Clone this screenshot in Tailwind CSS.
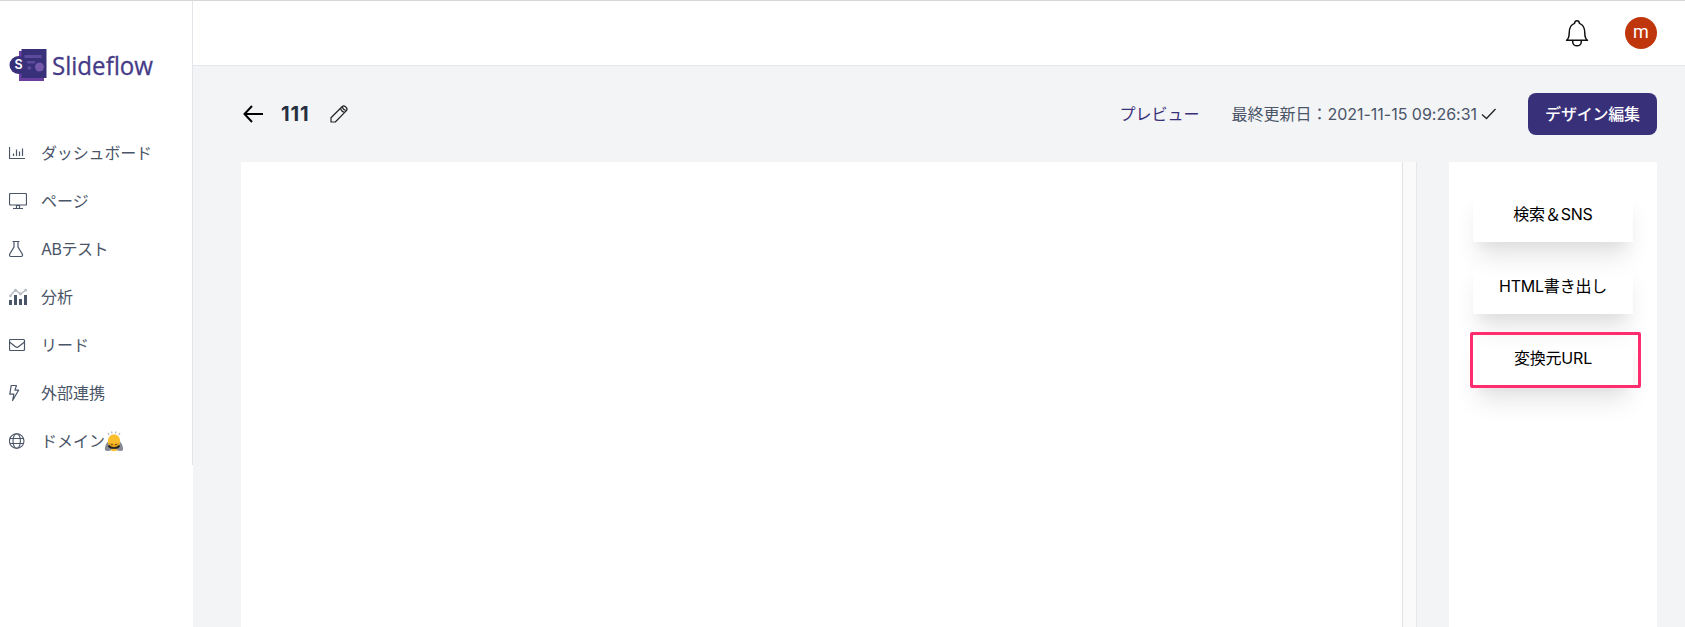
<!DOCTYPE html>
<html lang="ja">
<head>
    <meta charset="UTF-8">
    <meta name="viewport" content="width=device-width, initial-scale=1.0">
    <title>Slideflow</title>
    <script src="https://cdn.jsdelivr.net/npm/@tailwindcss/browser@4"></script>
</head>
<body class="h-screen overflow-hidden bg-white font-['Inter','Noto_Sans_CJK_JP',sans-serif] text-base text-[#4a5568]">
    <div class="flex h-full border-t border-[#d6d6d6]">
        <!-- Sidebar -->
        <aside class="w-[193px] shrink-0">
            <div class="h-[464px] border-r border-[#e2e5ea]">
                <div class="h-32 pl-[9px] pt-[45px]">
                    <svg class="overflow-visible" width="160" height="44" viewBox="0 0 160 44">
                        <rect x="10" y="5" width="25" height="30" fill="#6b3fa0"/>
                        <rect x="12.500" y="3" width="25" height="29" fill="#39307a"/>
                        <rect x="15.500" y="9" width="17" height="3" fill="#5c4a9c"/>
                        <rect x="18" y="15" width="8" height="2.500" fill="#5c4a9c"/>
                        <rect x="18.500" y="20.500" width="3.500" height="3" fill="#5c4a9c"/>
                        <circle cx="30.500" cy="21" r="4.500" fill="#7458aa"/>
                        <circle cx="9.500" cy="19" r="9" fill="#39307a"/>
                        <text x="9.500" y="23.300" text-anchor="middle" font-family="Inter" font-size="12.500" font-weight="600" fill="#fff">S</text>
                        <text x="43" y="28.500" textLength="101" lengthAdjust="spacingAndGlyphs" font-family="Open Sans" font-size="25.500" fill="#453b87" stroke="#453b87" stroke-width=".3">Slideflow</text>
                    </svg>
                </div>
                <nav class="[&>a]:flex [&>a]:h-12 [&>a]:items-center [&>a]:pl-[9px] [&_span]:-mt-px [&_svg]:mr-[14px] [&_svg]:shrink-0">
                    <a href="#">
                        <svg width="18" height="18" viewBox="0 0 18 18" fill="none" stroke="currentColor" stroke-width="1.200"><path d="M.5 3v11.500H16M4.500 12V9.500M7.500 12V5.500M10.500 12V7.500M13.500 12V4.500"/></svg>
                        <span class="tracking-[-0.15px]">ダッシュボード</span>
                    </a>
                    <a href="#">
                        <svg width="18" height="18" viewBox="0 0 18 18" fill="none" stroke="currentColor" stroke-width="1.200"><rect x=".5" y="1.500" width="17" height="11.500" rx="1"/><path d="M4 16.500h10M7.500 16v-2.500h3V16"/></svg>
                        <span>ページ</span>
                    </a>
                    <a href="#">
                        <svg width="18" height="18" viewBox="0 0 18 18" fill="none" stroke="currentColor" stroke-width="1.200"><path d="M3.500 1.500h7M5 1.500v5.500L.6 14.300c-.4 1 .1 2.200 1.200 2.200h10.400c1.100 0 1.600-1.200 1.200-2.200L9 7V1.500"/></svg>
                        <span class="tracking-[-0.5px]">ABテスト</span>
                    </a>
                    <a href="#">
                        <svg width="18" height="18" viewBox="0 0 18 18"><path d="M1 8l5.500-6 5 4L17 2" fill="none" stroke="#b7bbc2" stroke-width="1.500"/><g fill="#b7bbc2"><circle cx="1.300" cy="8" r="1.300"/><circle cx="6.500" cy="2.200" r="1.500"/><circle cx="11.500" cy="6" r="1.400"/><circle cx="16.700" cy="2.200" r="1.400"/></g><path fill="currentColor" d="M0 12h3v5H0zM5 7h3v10H5zM10 11h3v6h-3zM15 7h3v10h-3z"/></svg>
                        <span>分析</span>
                    </a>
                    <a href="#">
                        <svg width="18" height="18" viewBox="0 0 18 18" fill="none" stroke="currentColor" stroke-width="1.200"><rect x=".5" y="3.500" width="15" height="11" rx="1"/><path d="M.8 6.300l5.700 4.500c.9.700 2.100.7 3 0l5.700-4.500"/></svg>
                        <span>リード</span>
                    </a>
                    <a href="#">
                        <svg width="18" height="18" viewBox="0 0 18 18" fill="none" stroke="currentColor" stroke-width="1.200" stroke-linejoin="round"><path d="M2.200 1.500h5.200L6 6.200h3.600L3.600 16.500l1.300-6.300H.8z"/></svg>
                        <span>外部連携</span>
                    </a>
                    <a href="#">
                        <svg width="18" height="18" viewBox="0 0 18 18" fill="none" stroke="currentColor" stroke-width="1.100"><circle cx="7.700" cy="9" r="7.300"/><ellipse cx="7.700" cy="9" rx="3.700" ry="7.300"/><path d="M1 6.500h13.400M1 11.500h13.400"/></svg>
                        <span>ドメイン</span>
                        <!-- bowing person -->
                        <svg class="-ml-px" width="20" height="22" viewBox="0 0 20 22">
                            <path d="M4 3l1.200 2M7.500 1.500l.6 2M12 1.500l-.6 2M16 3l-1.200 2" stroke="#b5b5b5" stroke-width="1.200"/>
                            <path d="M1 20c-.5-3 1.500-8 4-9h10c2.500 1 4.500 6 4 9-1.500 1.500-5 1-6 0H7c-1 1-4.500 1.500-6 0z" fill="#858a94"/>
                            <path d="M4 11c0-4 2.500-6.500 6-6.500s6 2.500 6 6.500c0 4.500-2 7-6 7s-6-2.500-6-7z" fill="#fbbd2c"/>
                            <path d="M5 13c2 1.200 8 1.200 10 0-.3 3.500-2.500 4.500-5 4.500s-4.700-1-5-4.500z" fill="#e3a01c"/>
                            <path d="M7 14.300h1.800M11.200 14.300H13" stroke="#6b4508"/>
                            <path d="M4.500 15.500c1.800 3.300 9.200 3.300 11 0" fill="none" stroke="#222" stroke-width="1.700"/>
                            <path d="M7 19h6v1.500q-3 1.500-6 0z" fill="#fbbd2c"/>
                        </svg>
                    </a>
                </nav>
            </div>
        </aside>

        <div class="flex min-w-0 flex-1 flex-col">
            <!-- Top bar -->
            <header class="flex h-[65px] shrink-0 items-center justify-end border-b border-[#e2e5ea] bg-white pr-7">
                <svg class="mr-9" width="24" height="28" viewBox="0 0 24 28" fill="none" stroke="#111" stroke-width="1.500" stroke-linejoin="round" stroke-linecap="round"><path d="M1.500 21.300c2.100-1.500 2.700-3.500 2.700-7.300 0-5 1.500-8.300 5.300-9.600.2-1.800 1-2.700 2.500-2.700s2.300.9 2.500 2.700c3.800 1.300 5.300 4.600 5.300 9.600 0 3.800.6 5.800 2.700 7.300z"/><path d="M7.700 21.500v1.200c0 2.300 1.900 4.100 4.300 4.100s4.300-1.800 4.300-4.100v-1.200"/></svg>
                <div class="flex size-8 items-center justify-center rounded-full bg-[#bf360c] font-['Roboto',sans-serif] text-lg leading-none text-white"><span class="-mt-0.5">m</span></div>
            </header>

            <main class="flex min-h-0 flex-1 flex-col bg-[#f3f4f6] pl-12 pr-7">
                <!-- Title row -->
                <div class="flex h-24 shrink-0 items-center">
                    <svg class="ml-0.5" width="21" height="18" viewBox="0 0 21 18" fill="none" stroke="#000" stroke-width="2"><path d="M9 1L1.500 9 9 17M1.500 9H20"/></svg>
                    <h1 class="ml-[17px] text-xl font-bold tracking-[0.9px] text-[#252f3f]">111</h1>
                    <svg class="ml-5" width="18" height="18" viewBox="0 0 18 18" fill="none" stroke="#222" stroke-width="1.200" stroke-linejoin="round"><path d="M1 17v-4.300L12 1.800c1-1 2.400-1 3.400-.1l.8.8c1 1 1 2.400 0 3.400L5.300 17zM10.700 3.200c.3 2.300 1.700 3.800 4.100 4.100M12.500 1.500c.1 2.200 1.500 3.700 4 4"/></svg>
                    <a href="#" class="ml-auto text-[#39307a]">プレビュー</a>
                    <p class="ml-8 flex items-center">最終更新日：<span class="tracking-[-0.02px]">2021-11-15 09:26:31</span>
                        <svg class="ml-1" width="16" height="14" viewBox="0 0 16 14" fill="none" stroke="#222" stroke-width="1.300"><path d="M1 7.500l4.500 4L14.500 2"/></svg>
                    </p>
                    <button class="ml-[31px] h-[42px] w-[129px] rounded-lg bg-[#39307a] font-medium tracking-[-0.2px] text-white">デザイン編集</button>
                </div>

                <div class="flex min-h-0 flex-1">
                    <!-- Canvas -->
                    <div class="flex flex-1 border-r border-[#e8e8e8] bg-white">
                        <div class="ml-auto w-3.5 border-l border-[#e2e2e2] bg-[#fafafa]"></div>
                    </div>
                    <!-- Actions -->
                    <div class="ml-8 w-52 overflow-hidden bg-white px-6 pt-6 text-black">
                        <div class="flex flex-col gap-4 [&>button]:h-14 [&>button]:tracking-[-0.2px] [&>button]:shadow-[0_20px_25px_-5px_rgba(0,0,0,0.1),0_10px_10px_-5px_rgba(0,0,0,0.04)]">
                            <button>検索＆SNS</button>
                            <button>HTML書き出し</button>
                            <button class="relative">変換元URL
                                <span class="absolute -left-[3px] top-[2px] h-14 w-[171px] rounded-xs border-3 border-[#ff2d6f]"></span>
                            </button>
                        </div>
                    </div>
                </div>
            </main>
        </div>
    </div>
</body>
</html>
